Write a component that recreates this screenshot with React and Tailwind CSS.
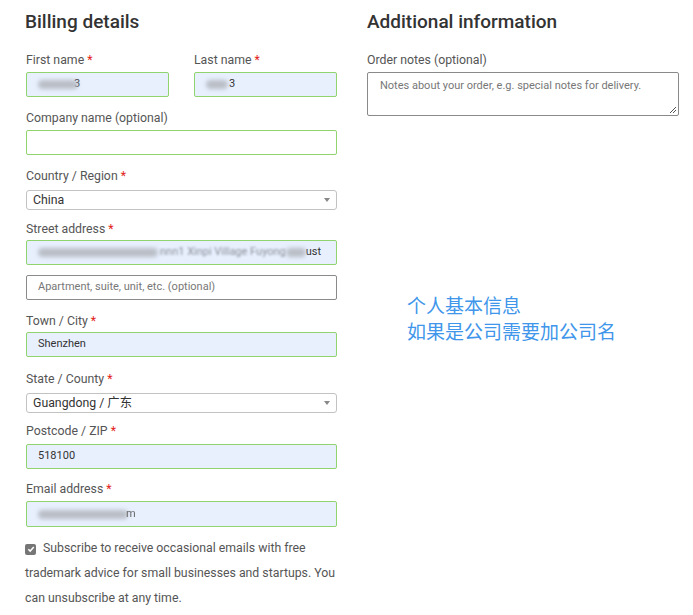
import React from "react";

const Req = () => <span className="text-[#e2231a] ml-[3px]">*</span>;

function Label({ children, req, className = "" }) {
  return (
    <div className={`text-[12.3px] leading-[16px] text-[#555] ${className}`}>
      {children}
      {req && <Req />}
    </div>
  );
}

function Blur({ w }) {
  return <span className="inline-block h-[9px] bg-[#b9bec6] rounded-full blur-[2px] align-middle" style={{ width: w }} />;
}

function Field({ children, filled = true, green = true, className = "" }) {
  return (
    <div
      className={`h-[25px] rounded-[2px] border flex items-center pl-[11px] text-[11px] text-[#333] overflow-hidden whitespace-nowrap ${
        filled ? "bg-[#e8f0fe]" : "bg-white"
      } ${green ? "border-[#8fd46f]" : "border-[#8a8a8a]"} ${className}`}
    >
      {children}
    </div>
  );
}

function Select({ children, className = "" }) {
  return (
    <div className={`h-[20px] rounded-[3px] border border-[#c2c2c2] bg-white flex items-center pl-[6px] pr-[6px] text-[12.3px] text-[#333] ${className}`}>
      <span className="flex-1">{children}</span>
      <svg width="6" height="4" viewBox="0 0 6 4"><path d="M0 0h6L3 4z" fill="#888" /></svg>
    </div>
  );
}

export default function App() {
  return (
    <div
      className="w-[693px] h-[615px] bg-white overflow-hidden flex gap-[30px] pl-[26px]"
      style={{ fontFamily: "Roboto, 'Noto Sans CJK SC', sans-serif" }}
    >
      <div className="w-[311px] flex flex-col">
        <h2 className="mt-[10px] text-[19px] leading-[24px] font-medium text-[#333] -ml-[1px]">Billing details</h2>
        <div className="mt-[18px] flex gap-[25px]">
          <div className="flex-1">
            <Label req>First name</Label>
            <Field className="mt-[4px]">
              <Blur w={40} />
              <span className="-ml-[4px]">3</span>
            </Field>
          </div>
          <div className="flex-1">
            <Label req>Last name</Label>
            <Field className="mt-[4px]">
              <Blur w={22} />
              <span className="ml-[1px]">3</span>
            </Field>
          </div>
        </div>
        <Label className="mt-[13px]">Company name (optional)</Label>
        <Field className="mt-[4px]" filled={false} />
        <Label req className="mt-[13px]">Country / Region</Label>
        <Select className="mt-[6px]">China</Select>
        <Label req className="mt-[11px]">Street address</Label>
        <Field className="mt-[3px]">
          <Blur w={120} />
          <span className="ml-[2px] text-[#8a8f98] blur-[1px]">nnn1 Xinpi Village Fuyong</span>
          <Blur w={20} />
          <span>ust</span>
        </Field>
        <Field className="mt-[10px] text-[#777]" filled={false} green={false}>
          Apartment, suite, unit, etc. (optional)
        </Field>
        <Label req className="mt-[13px]">Town / City</Label>
        <Field className="mt-[3px]">Shenzhen</Field>
        <Label req className="mt-[14px]">State / County</Label>
        <Select className="mt-[6px] h-[19px]">Guangdong / 广东</Select>
        <Label req className="mt-[10px]">Postcode / ZIP</Label>
        <Field className="mt-[5px]">518100</Field>
        <Label req className="mt-[12px]">Email address</Label>
        <Field className="mt-[4px] h-[26px]">
          <Blur w={90} />
          <span className="-ml-[2px] text-[#666] blur-[0.5px]">m</span>
        </Field>
        <div className="mt-[9px] text-[12.3px] leading-[25px] text-[#555] -ml-[1px]">
          <span className="inline-flex items-center justify-center w-[11px] h-[11px] rounded-[2px] bg-[#767676] align-[-1px] mr-[7px]">
            <svg width="8" height="8" viewBox="0 0 8 8"><path d="M1.3 4.2l1.9 1.9 3.6-4" stroke="#fff" strokeWidth="1.5" fill="none" /></svg>
          </span>
          Subscribe to receive occasional emails with free trademark advice for small businesses and startups. You can unsubscribe at any time.
        </div>
      </div>
      <div className="w-[312px] flex flex-col">
        <h2 className="mt-[10px] text-[19px] leading-[24px] font-medium text-[#333]">Additional information</h2>
        <Label className="mt-[18px]">Order notes (optional)</Label>
        <div className="relative mt-[4px] h-[44px] rounded-[2px] border border-[#8a8a8a] bg-white pl-[12px] pt-[5px] text-[11px] text-[#777]">
          Notes about your order, e.g. special notes for delivery.
          <svg className="absolute right-[1px] bottom-[1px]" width="8" height="8" viewBox="0 0 8 8">
            <path d="M7 1L1 7M7 4L4 7" stroke="#555" strokeWidth="1" />
          </svg>
        </div>
        <div className="mt-[178px] pl-[40px] text-[19px] leading-[26px] text-[#4096ea]">
          <div>个人基本信息</div>
          <div>如果是公司需要加公司名</div>
        </div>
      </div>
    </div>
  );
}
